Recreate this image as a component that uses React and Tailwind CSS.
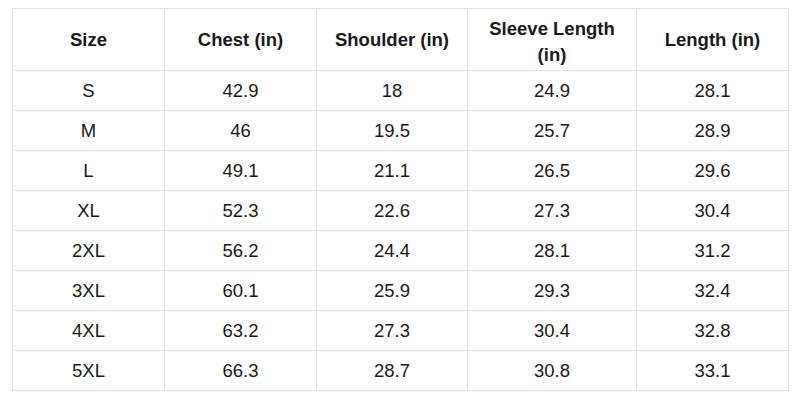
import React from 'react';

const headers = ['Size', 'Chest (in)', 'Shoulder (in)', 'Sleeve Length (in)', 'Length (in)'];

const rows = [
    ['S', '42.9', '18', '24.9', '28.1'],
    ['M', '46', '19.5', '25.7', '28.9'],
    ['L', '49.1', '21.1', '26.5', '29.6'],
    ['XL', '52.3', '22.6', '27.3', '30.4'],
    ['2XL', '56.2', '24.4', '28.1', '31.2'],
    ['3XL', '60.1', '25.9', '29.3', '32.4'],
    ['4XL', '63.2', '27.3', '30.4', '32.8'],
    ['5XL', '66.3', '28.7', '30.8', '33.1'],
];

const App = () => {
    return (
        <div className="w-[800px] h-[400px] bg-white pt-[8px] pl-[12px] font-['Liberation_Sans',Arial,sans-serif] text-[#1a1a1a]">
            <table className="table-fixed border-collapse w-[776px] text-[18.5px]">
                <colgroup>
                    <col className="w-[152px]" />
                    <col className="w-[152px]" />
                    <col className="w-[151px]" />
                    <col className="w-[169px]" />
                    <col className="w-[152px]" />
                </colgroup>
                <thead>
                    <tr className="h-[62px]">
                        {headers.map((h, i) => (
                            <th
                                key={h}
                                className={i === 3
                                    ? "border border-[#e3e3e3] font-bold text-center leading-[26px] px-[16px] pt-[5px]"
                                    : "border border-[#e3e3e3] font-bold text-center leading-[26px] px-[16px] pt-[1px]"}
                            >
                                {h}
                            </th>
                        ))}
                    </tr>
                </thead>
                <tbody>
                    {rows.map((row) => (
                        <tr key={row[0]} className="h-[40px]">
                            {row.map((cell, i) => (
                                <td key={i} className="border border-[#e3e3e3] text-center pt-[1px]">
                                    {cell}
                                </td>
                            ))}
                        </tr>
                    ))}
                </tbody>
            </table>
        </div>
    );
};

export default App;
